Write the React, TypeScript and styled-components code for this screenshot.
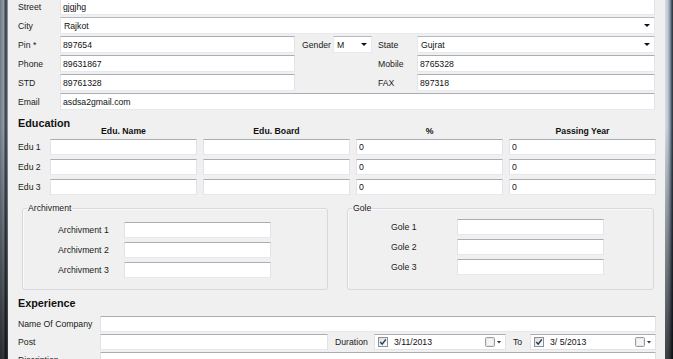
import { Fragment } from 'react';
import styled, { createGlobalStyle } from 'styled-components';

const GlobalStyle = createGlobalStyle`
  html, body {
    margin: 0;
    padding: 0;
    background: #f0f0f0;
    overflow: hidden;
  }
  body {
    font-family: "Liberation Sans", Arial, sans-serif;
  }
`;

const Window = styled.div`
  display: flex;
  width: 673px;
  height: 359px;
  overflow: hidden;
`;

const Frame = styled.div<{ $side: 'left' | 'right' }>`
  flex: 0 0 8px;
  background: ${(p) =>
    p.$side === 'left'
      ? `linear-gradient(to bottom, rgba(0,0,0,0) 35%, rgba(0,0,0,0.65) 100%),
         linear-gradient(to right, #6f7a86 0, #949fab 4px, #333a43 5px, #535c67 7px, #b9c3cd 8px)`
      : `linear-gradient(to bottom, rgba(0,0,0,0) 35%, rgba(0,0,0,0.7) 100%),
         linear-gradient(to right, #d7dee6 0, #bac7d4 3px, #8795a5 5px, #3d4752 7px, #2a3038 8px)`};
`;

const Client = styled.div`
  flex: 1;
  background: #f0f0f0;
  overflow: hidden;
  color: #1a1a1a;
  font-size: 8.7px;
`;

/* content is scrolled a little, so the first row is cut at the top */
const Scroller = styled.div`
  margin-top: -2px;
  padding: 0 9px 0 10px;
`;

const AddressGrid = styled.div`
  display: grid;
  grid-template-columns: 42px 235px 38px 39px 45px 1fr;
  grid-auto-rows: 17px;
  row-gap: 2px;
  align-items: center;
  padding-right: 1px;
`;

const Label = styled.span<{ $indent?: number }>`
  padding-left: ${(p) => p.$indent || 0}px;
  white-space: nowrap;
  line-height: 10px;
`;

const TextBox = styled.input<{ $wide?: boolean; $width?: number }>`
  grid-column: ${(p) => (p.$wide ? '2 / -1' : 'auto')};
  box-sizing: border-box;
  width: ${(p) => (p.$width ? `${p.$width}px` : '100%')};
  flex: ${(p) => (p.$width ? `0 0 ${p.$width}px` : 'initial')};
  height: 100%;
  margin: 0;
  padding: 0 2px;
  background: #fff;
  border: 1px solid #e2e3ea;
  border-top-color: #abadb3;
  border-bottom-color: #e3e9ef;
  border-radius: 0;
  font: 8.7px "Liberation Sans", Arial, sans-serif;
  color: #111;
  outline: none;
`;

const ComboBox = styled.div<{ $wide?: boolean }>`
  grid-column: ${(p) => (p.$wide ? '2 / -1' : 'auto')};
  box-sizing: border-box;
  height: 100%;
  display: flex;
  align-items: center;
  justify-content: space-between;
  padding: 0 4px 0 3px;
  background: #fff;
  border: 1px solid #e8e9ee;
  border-top-color: #b6b8bf;
  color: #111;
`;

const DropArrow = styled.span`
  width: 0;
  height: 0;
  border-left: 3px solid transparent;
  border-right: 3px solid transparent;
  border-top: 3px solid #111;
`;

const SectionTitle = styled.div<{ $gap: number }>`
  margin-top: ${(p) => p.$gap}px;
  font-size: 10.8px;
  font-weight: bold;
  line-height: 12px;
  color: #111;
`;

const EduGrid = styled.div`
  margin-top: -2px;
  display: grid;
  grid-template-columns: 26px repeat(4, 147px);
  grid-template-rows: 8px repeat(3, 16px);
  column-gap: 6px;
  row-gap: 4px;
  align-items: center;
`;

const ColHead = styled.span`
  font-weight: bold;
  text-align: center;
  line-height: 8px;
  color: #111;
`;

const GroupRow = styled.div`
  margin-top: 8px;
  display: grid;
  grid-template-columns: 306px 307px;
  column-gap: 19px;
  padding-left: 4px;
`;

const GroupBox = styled.fieldset`
  margin: 0;
  padding: 0;
  border: 1px solid #d5d9de;
  border-radius: 3px;
  box-shadow: inset 1px 1px 0 #fafafa;
  min-width: 0;
`;

const Legend = styled.legend`
  margin-left: 4px;
  padding: 0 1px;
  font-size: 8.7px;
  line-height: 10px;
`;

const GroupGrid = styled.div<{ $top: number; $indent: number }>`
  display: grid;
  grid-template-columns: 66px 147px;
  grid-auto-rows: 16px;
  row-gap: 4px;
  align-items: center;
  padding: ${(p) => p.$top}px 0 11px ${(p) => p.$indent}px;
`;

const ExpGrid = styled.div`
  margin-top: 7px;
  display: grid;
  grid-template-columns: 82px 1fr;
  grid-auto-rows: 16px;
  row-gap: 2px;
  align-items: center;
`;

const PostLine = styled.div`
  display: flex;
  align-items: center;
  height: 100%;
`;

const InlineLabel = styled.span<{ $width: number }>`
  flex: 0 0 ${(p) => p.$width}px;
  box-sizing: border-box;
  padding-left: 7px;
  white-space: nowrap;
`;

const DatePicker = styled.div<{ $width?: number }>`
  box-sizing: border-box;
  flex: ${(p) => (p.$width ? `0 0 ${p.$width}px` : '1')};
  height: 100%;
  display: flex;
  align-items: center;
  padding: 0 3px;
  background: #fff;
  border: 1px solid #e2e3ea;
  border-top-color: #abadb3;
  color: #111;
`;

const DateText = styled.span`
  flex: 1;
  margin-left: 6px;
  white-space: pre;
`;

const CheckBox = () => (
  <svg width="10" height="10" viewBox="0 0 10 10">
    <defs>
      <linearGradient id="cb" x1="0" y1="0" x2="1" y2="1">
        <stop offset="0" stopColor="#dcdcdc" />
        <stop offset="1" stopColor="#ffffff" />
      </linearGradient>
    </defs>
    <rect x="0.5" y="0.5" width="9" height="9" fill="url(#cb)" stroke="#8e8f8f" />
    <path d="M2.3 5 L4.2 7.2 L7.8 2.3" fill="none" stroke="#1c3a62" strokeWidth="1.4" />
  </svg>
);

const CalendarDrop = () => (
  <svg width="17" height="10" viewBox="0 0 17 10">
    <rect x="0.5" y="0.5" width="9" height="9" rx="1" fill="#e6e6e6" stroke="#9c9c9c" />
    <rect x="2" y="2" width="6" height="6" fill="#f4f4f4" />
    <path d="M12 4 L16 4 L14 6.5 Z" fill="#333" />
  </svg>
);

const edus = ['Edu 1', 'Edu 2', 'Edu 3'];

export default function App() {
  return (
    <>
      <GlobalStyle />
      <Window>
        <Frame $side="left" />
        <Client>
          <Scroller>
            <AddressGrid>
              <Label>Street</Label>
              <TextBox $wide readOnly value="gjgjhg" />

              <Label>City</Label>
              <ComboBox $wide>
                <span>Rajkot</span>
                <DropArrow />
              </ComboBox>

              <Label>Pin *</Label>
              <TextBox readOnly value="897654" />
              <Label $indent={7}>Gender</Label>
              <ComboBox>
                <span>M</span>
                <DropArrow />
              </ComboBox>
              <Label $indent={6}>State</Label>
              <ComboBox>
                <span>Gujrat</span>
                <DropArrow />
              </ComboBox>

              <Label>Phone</Label>
              <TextBox readOnly value="89631867" />
              <span />
              <span />
              <Label $indent={6}>Mobile</Label>
              <TextBox readOnly value="8765328" />

              <Label>STD</Label>
              <TextBox readOnly value="89761328" />
              <span />
              <span />
              <Label $indent={6}>FAX</Label>
              <TextBox readOnly value="897318" />

              <Label>Email</Label>
              <TextBox $wide readOnly value="asdsa2gmail.com" />
            </AddressGrid>

            <SectionTitle $gap={7}>Education</SectionTitle>
            <EduGrid>
              <span />
              <ColHead>Edu. Name</ColHead>
              <ColHead>Edu. Board</ColHead>
              <ColHead>%</ColHead>
              <ColHead>Passing Year</ColHead>
              {edus.map((e) => (
                <Fragment key={e}>
                  <Label>{e}</Label>
                  <TextBox readOnly value="" />
                  <TextBox readOnly value="" />
                  <TextBox readOnly value="0" />
                  <TextBox readOnly value="0" />
                </Fragment>
              ))}
            </EduGrid>

            <GroupRow>
              <GroupBox>
                <Legend>Archivment</Legend>
                <GroupGrid $top={9} $indent={35}>
                  {[1, 2, 3].map((n) => (
                    <Fragment key={n}>
                      <Label>Archivment {n}</Label>
                      <TextBox readOnly value="" />
                    </Fragment>
                  ))}
                </GroupGrid>
              </GroupBox>
              <GroupBox>
                <Legend>Gole</Legend>
                <GroupGrid $top={6} $indent={43}>
                  {[1, 2, 3].map((n) => (
                    <Fragment key={n}>
                      <Label>Gole {n}</Label>
                      <TextBox readOnly value="" />
                    </Fragment>
                  ))}
                </GroupGrid>
              </GroupBox>
            </GroupRow>

            <SectionTitle $gap={7}>Experience</SectionTitle>
            <ExpGrid>
              <Label>Name Of Company</Label>
              <TextBox readOnly value="" />

              <Label>Post</Label>
              <PostLine>
                <TextBox $width={228} readOnly value="" />
                <InlineLabel $width={46}>Duration</InlineLabel>
                <DatePicker $width={132}>
                  <CheckBox />
                  <DateText>3/11/2013</DateText>
                  <CalendarDrop />
                </DatePicker>
                <InlineLabel $width={24}>To</InlineLabel>
                <DatePicker>
                  <CheckBox />
                  <DateText>3/ 5/2013</DateText>
                  <CalendarDrop />
                </DatePicker>
              </PostLine>

              <Label>Discription</Label>
              <TextBox readOnly value="" />
            </ExpGrid>
          </Scroller>
        </Client>
        <Frame $side="right" />
      </Window>
    </>
  );
}
